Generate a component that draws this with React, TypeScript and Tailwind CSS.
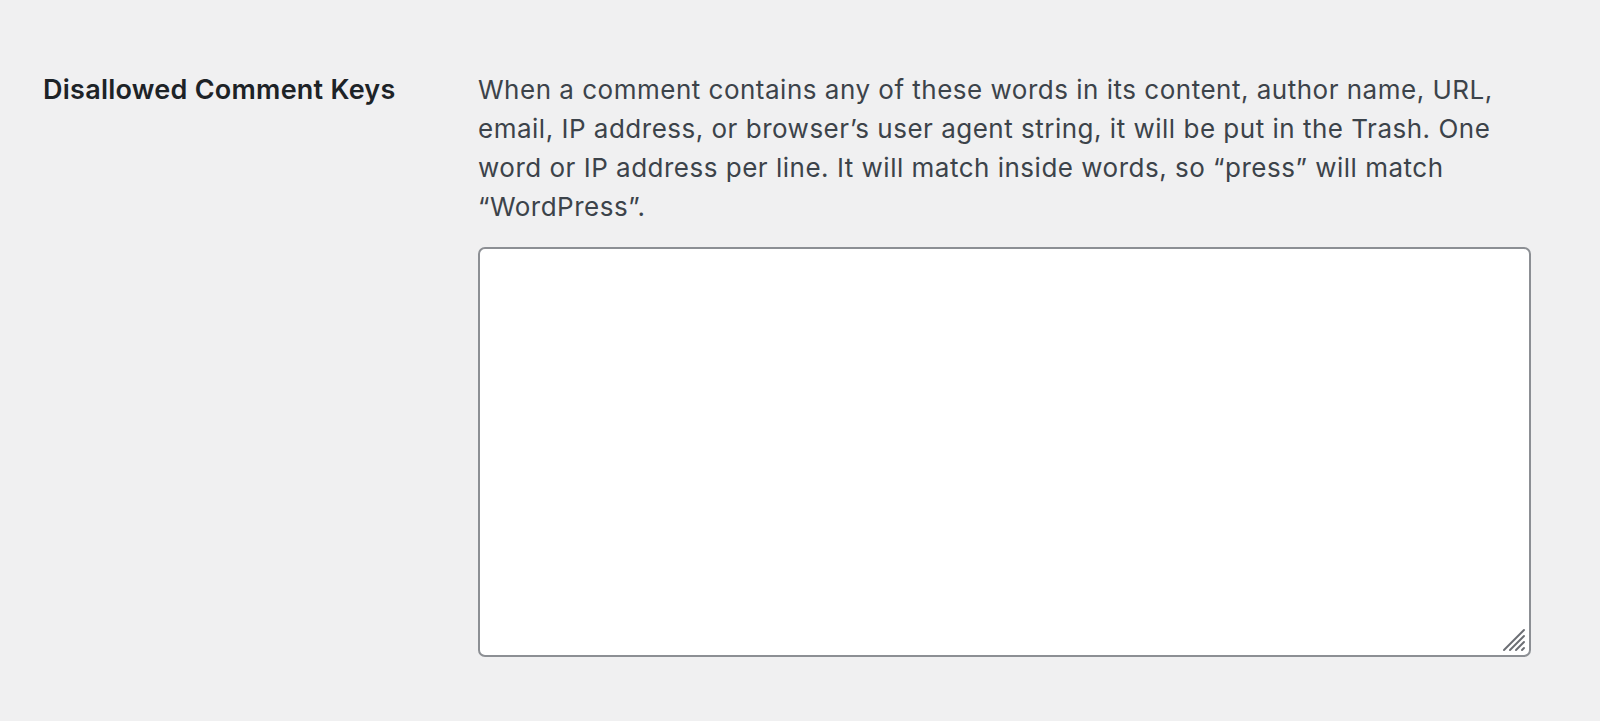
import React from "react";

export default function App() {
  return (
    <div
      className="w-[1600px] h-[721px] bg-[#f0f0f1] overflow-hidden"
      style={{ fontFamily: 'Inter, "Noto Sans", sans-serif' }}
    >
      <div className="flex pl-[43px] pt-[70px]">
        <div className="w-[435px] shrink-0 pt-[2px] text-[27px] leading-[35px] font-semibold text-[#1d2327] tracking-[0.25px]">
          Disallowed Comment Keys
        </div>
        <div className="w-[1053px] shrink-0">
          <p className="text-[26px] leading-[39px] text-[#3c434a] whitespace-nowrap tracking-[0.5px]">
            When a comment contains any of these words in its content, author name, URL,
            <br />
            email, IP address, or browser’s user agent string, it will be put in the Trash. One
            <br />
            word or IP address per line. It will match inside words, so “press” will match
            <br />
            “WordPress”.
          </p>
          <div className="relative mt-[21px] h-[410px] rounded-[7px] border-2 border-[#8c8f94] bg-white">
            <svg
              className="absolute right-[2px] bottom-[2px]"
              width="26"
              height="26"
              viewBox="0 0 26 26"
            >
              <g stroke="#6b6e73" strokeWidth="2" strokeLinecap="round">
                <line x1="3" y1="23" x2="23" y2="3" />
                <line x1="9" y1="23" x2="23" y2="9" />
                <line x1="15" y1="23" x2="23" y2="15" />
                <line x1="21" y1="23" x2="23" y2="21" />
              </g>
            </svg>
          </div>
        </div>
      </div>
    </div>
  );
}
